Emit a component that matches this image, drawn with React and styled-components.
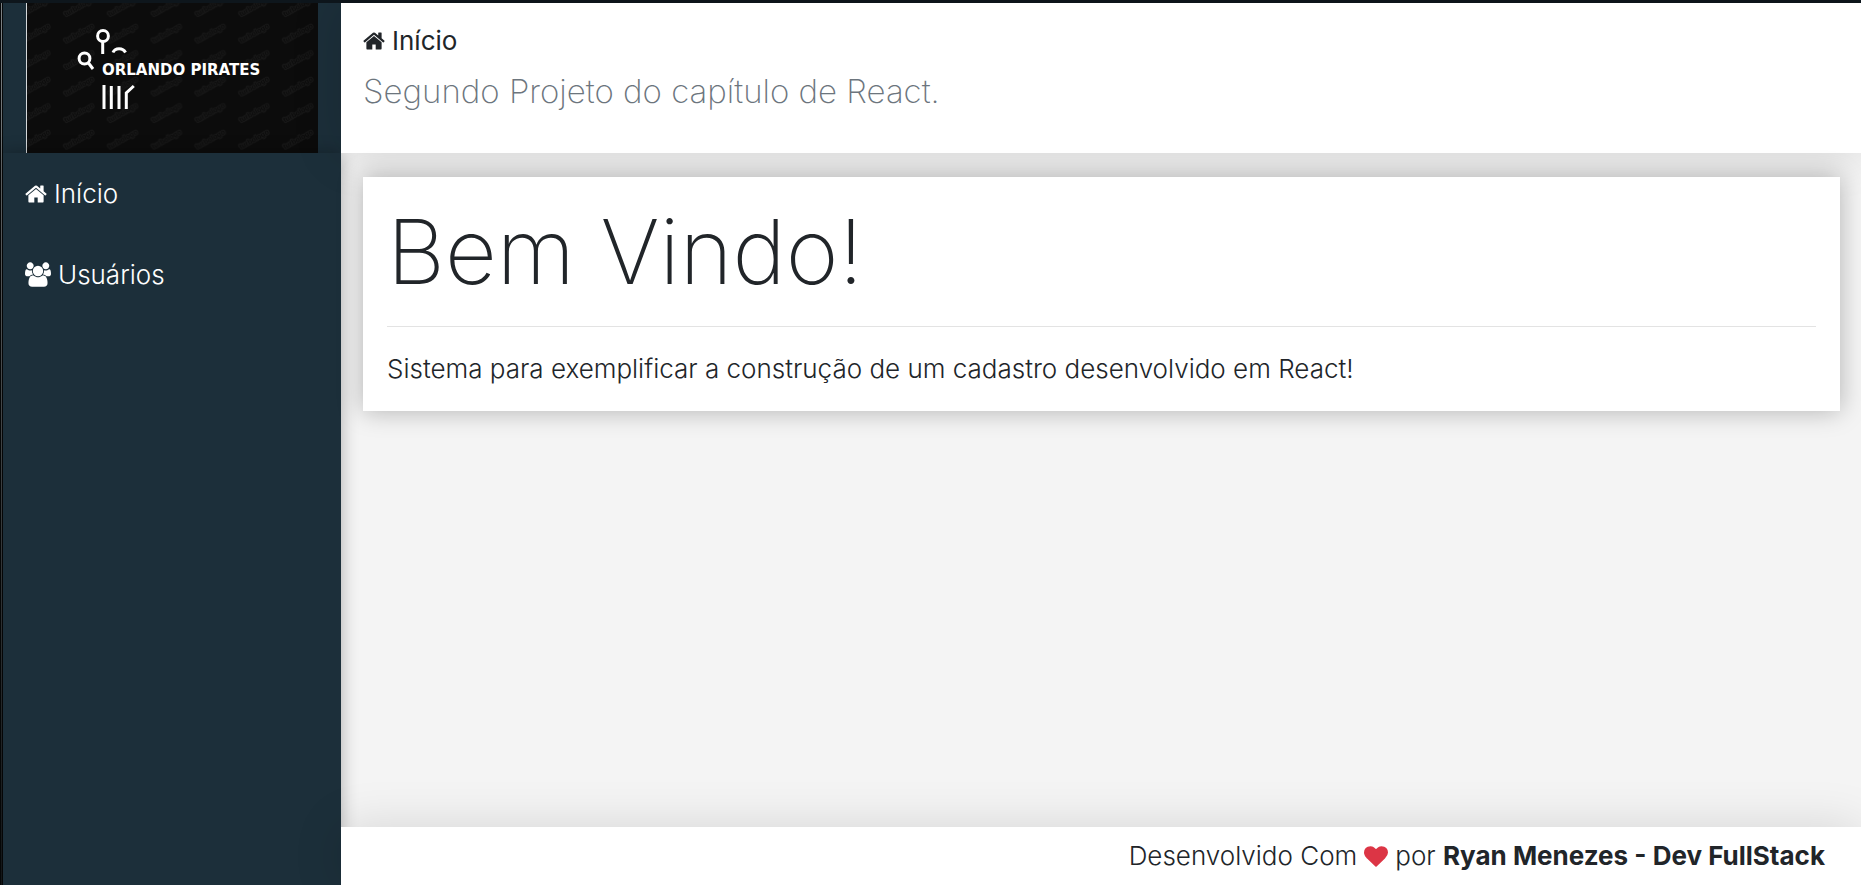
import React from "react";
import styled, { createGlobalStyle } from "styled-components";

const GlobalStyle = createGlobalStyle`
  * { box-sizing: border-box; }
  body {
    margin: 0;
    background: #0b131a;
    color: #212529;
    font-family: Inter, "Liberation Sans", sans-serif;
    font-size: 26px;
    font-weight: 300;
    line-height: 36px;
  }
`;

const Page = styled.div`
  display: grid;
  grid-template: "logo header" 150px "menu content" 1fr "menu footer" 58px / 338px 1fr;
  min-height: 100vh;
  padding-left: 3px;
  border-top: 3px solid #0e161c;
  background:
    linear-gradient(#7d8284, #15191b) 1px 0 / 1px 100% no-repeat,
    linear-gradient(#060809, #060809) 0 0 / 3px 100% no-repeat,
    #f4f4f4;
`;

const LogoArea = styled.aside`
  grid-area: logo;
  padding: 0 23px;
  background: #1c2f3a;
`;

const LogoLink = styled.a`
  display: block;
  height: 100%;
  border-left: 1px solid #d5d8da;
  svg { display: block; width: 100%; height: 100%; }
`;

const MenuArea = styled.aside`
  grid-area: menu;
  position: relative;
  background: #1c2f3a;
  box-shadow: 0 0 16px rgba(0, 0, 0, 0.3);
`;

const Menu = styled.nav`
  display: flex;
  flex-direction: column;
`;

const MenuLink = styled.a`
  display: flex;
  align-items: center;
  gap: 7px;
  height: 81px;
  padding: 0 22px;
  color: #fff;
  text-decoration: none;
`;

const Header = styled.header`
  grid-area: header;
  position: relative;
  display: flex;
  flex-direction: column;
  gap: 12px;
  padding: 20px 22px;
  background: #fff;
  box-shadow: 0 0 50px rgba(0, 0, 0, 0.15);
`;

const Title = styled.h1`
  display: flex;
  align-items: center;
  gap: 7px;
  margin: 0;
  font-size: 26px;
  font-weight: 400;
  line-height: 36px;
`;

const Subtitle = styled.p`
  margin: 0;
  color: #6c757d;
  font-size: 33px;
  font-weight: 200;
  line-height: 40px;
`;

const Content = styled.main`
  grid-area: content;
  padding: 24px 21px 24px 22px;
`;

const Card = styled.section`
  position: relative;
  padding: 24px;
  background: #fff;
  box-shadow: 0 0 24px rgba(0, 0, 0, 0.28);
`;

const Display = styled.h2`
  margin: 0;
  font-size: 90px;
  font-weight: 200;
  line-height: 101px;
`;

const Divider = styled.hr`
  margin: 24px 0;
  border: 0;
  border-top: 1px solid #e3e3e3;
`;

const Text = styled.p`
  margin: 0;
`;

const Footer = styled.footer`
  grid-area: footer;
  position: relative;
  display: flex;
  align-items: center;
  justify-content: flex-end;
  gap: 7px;
  padding: 0 36px;
  background: #fff;
  box-shadow: 0 0 50px rgba(0, 0, 0, 0.13);
  strong { font-weight: 700; }
`;

const Icon = styled.svg`
  flex: none;
  width: ${(p) => p.$width || 22}px;
  height: ${(p) => p.$height || 22}px;
  fill: ${(p) => p.$color || "currentColor"};
`;

const HomeIcon = () => (
  <Icon viewBox="64 128 1664 1536" aria-hidden="true">
    <path d="M1472 992v480q0 26-19 45t-45 19h-384v-384h-256v384h-384q-26 0-45-19t-19-45v-480q0-1 .5-3t.5-3l575-474 575 474q1 2 1 6zm223-69l-62 74q-8 9-21 11h-3q-13 0-21-7l-692-577-692 577q-12 8-24 7-13-2-21-11l-62-74q-8-10-7-23.5t11-21.5l719-599q32-26 76-26t76 26l244 204v-195q0-14 9-23t23-9h192q14 0 23 9t9 23v408l219 182q10 8 11 21.5t-7 23.5z" />
  </Icon>
);

const UsersIcon = () => (
  <Icon $width={26} $height={25} viewBox="-64 0 1920 1792" aria-hidden="true">
    <path d="M529 896q-162 5-265 128h-134q-82 0-138-40.5t-56-118.5q0-353 124-353 6 0 43.5 21t97.5 42.5 119 21.5q67 0 133-23-5 37-5 66 0 139 81 256zm1071 637q0 120-73 189.5t-194 69.5h-874q-121 0-194-69.5t-73-189.5q0-53 3.5-103.5t14-109 26.5-108.5 43-97.5 62-81 85.5-53.5 111.5-20q10 0 43 21.5t73 48 107 48 135 21.5 135-21.5 107-48 73-48 43-21.5q61 0 111.5 20t85.5 53.5 62 81 43 97.5 26.5 108.5 14 109 3.5 103.5zm-1024-1277q0 106-75 181t-181 75-181-75-75-181 75-181 181-75 181 75 75 181zm704 384q0 159-112.5 271.5t-271.5 112.5-271.5-112.5-112.5-271.5 112.5-271.5 271.5-112.5 271.5 112.5 112.5 271.5zm576 225q0 78-56 118.5t-138 40.5h-134q-103-123-265-128 81-117 81-256 0-29-5-66 66 23 133 23 59 0 119-21.5t97.5-42.5 43.5-21q124 0 124 353zm-128-609q0 106-75 181t-181 75-181-75-75-181 75-181 181-75 181 75 75 181z" />
  </Icon>
);

const HeartIcon = () => (
  <Icon $width={24} $height={21} $color="#dc3545" viewBox="0 128 1792 1536" aria-hidden="true">
    <path d="M896 1664q-26 0-44-18l-624-602q-10-8-27.5-26t-55.5-65.5-68-97.5-53.5-121-23.5-138q0-220 127-344t351-124q62 0 126.5 21.5t120 58 95.5 68.5 76 68q36-36 76-68t95.5-68.5 120-58 126.5-21.5q224 0 351 124t127 344q0 221-229 450l-623 600q-18 18-44 18z" />
  </Icon>
);

const Logo = () => (
  <svg viewBox="0 0 291 150" role="img" aria-label="Orlando Pirates">
    <defs>
      <pattern id="watermark" x="30" y="17" width="43.8" height="26.5" patternUnits="userSpaceOnUse">
        <text
          transform="translate(22 13.5) rotate(-29)"
          y="2"
          textAnchor="middle"
          fontFamily="Liberation Sans"
          fontWeight="700"
          fontSize="7"
          fill="#0b0b0b"
          stroke="#181818"
          strokeWidth="2"
          paintOrder="stroke"
        >
          turbologo
        </text>
      </pattern>
    </defs>
    <rect width="291" height="150" fill="#0c0c0c" />
    <rect width="291" height="150" fill="url(#watermark)" />
    <g fill="none" stroke="#fff" strokeWidth="3">
      <circle cx="76" cy="33" r="5.4" />
      <path d="M75.7 39v12" />
      <circle cx="57.5" cy="55.5" r="5.4" />
      <path d="M61.5 60l4.5 6" />
      <path d="M86 49.5c2-5 10-5 12.500 0" />
      <path d="M77 82v24M84.300 83v23M92 83v23M99.300 106v-16l7.500-7" />
    </g>
    <text x="75" y="72" fill="#fff" fontFamily="DejaVu Sans" fontWeight="700" fontSize="15">ORLANDO PIRATES</text>
  </svg>
);

export default function App() {
  return (
    <>
      <GlobalStyle />
      <Page>
        <LogoArea>
          <LogoLink href="#/" aria-label="Orlando Pirates"><Logo /></LogoLink>
        </LogoArea>
        <MenuArea>
          <Menu>
            <MenuLink href="#/"><HomeIcon />Início</MenuLink>
            <MenuLink href="#/users"><UsersIcon />Usuários</MenuLink>
          </Menu>
        </MenuArea>
        <Header>
          <Title><HomeIcon />Início</Title>
          <Subtitle>Segundo Projeto do capítulo de React.</Subtitle>
        </Header>
        <Content>
          <Card>
            <Display>Bem Vindo!</Display>
            <Divider />
            <Text>Sistema para exemplificar a construção de um cadastro desenvolvido em React!</Text>
          </Card>
        </Content>
        <Footer>
          <span>Desenvolvido Com</span>
          <HeartIcon />
          <span>por <strong>Ryan Menezes - Dev FullStack</strong></span>
        </Footer>
      </Page>
    </>
  );
}
